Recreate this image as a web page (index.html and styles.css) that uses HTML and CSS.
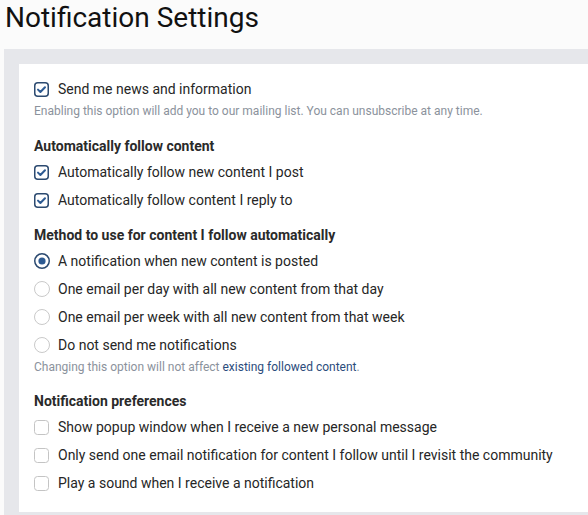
FILE: index.html
```html
<!DOCTYPE html>
<html>
<head>
<meta charset="utf-8">
<link rel="stylesheet" href="styles.css">
</head>
<body>
<header class="top"><h1 class="title">Notification Settings</h1></header>
<div class="panel">
  <div class="card">
    <div class="group">
      <label class="opt"><span class="cb on"><svg width="15" height="15" viewBox="0 0 15 15"><rect x="0.75" y="0.75" width="13.5" height="13.5" rx="3" fill="none" stroke="#2c4a70" stroke-width="1.5"/><path d="M4 7.6 L6.4 10 L11 5.2" fill="none" stroke="#2d5a92" stroke-width="2" stroke-linecap="round" stroke-linejoin="round"/></svg></span>Send me news and information</label>
      <p class="help">Enabling this option will add you to our mailing list. You can unsubscribe at any time.</p>
    </div>
    <div class="group">
      <h2 class="head">Automatically follow content</h2>
      <label class="opt"><span class="cb on"><svg width="15" height="15" viewBox="0 0 15 15"><rect x="0.75" y="0.75" width="13.5" height="13.5" rx="3" fill="none" stroke="#2c4a70" stroke-width="1.5"/><path d="M4 7.6 L6.4 10 L11 5.2" fill="none" stroke="#2d5a92" stroke-width="2" stroke-linecap="round" stroke-linejoin="round"/></svg></span>Automatically follow new content I post</label>
      <label class="opt"><span class="cb on"><svg width="15" height="15" viewBox="0 0 15 15"><rect x="0.75" y="0.75" width="13.5" height="13.5" rx="3" fill="none" stroke="#2c4a70" stroke-width="1.5"/><path d="M4 7.6 L6.4 10 L11 5.2" fill="none" stroke="#2d5a92" stroke-width="2" stroke-linecap="round" stroke-linejoin="round"/></svg></span>Automatically follow content I reply to</label>
    </div>
    <div class="group">
      <h2 class="head">Method to use for content I follow automatically</h2>
      <label class="opt"><span class="rd on"><svg width="16" height="16" viewBox="0 0 16 16"><circle cx="8" cy="8" r="7.25" fill="none" stroke="#2c4a70" stroke-width="1.5"/><circle cx="8" cy="8" r="3.6" fill="#2d5a92"/></svg></span>A notification when new content is posted</label>
      <label class="opt"><span class="rd"><svg width="16" height="16" viewBox="0 0 16 16"><circle cx="8" cy="8" r="7.5" fill="none" stroke="#c9c9c9" stroke-width="1"/></svg></span>One email per day with all new content from that day</label>
      <label class="opt"><span class="rd"><svg width="16" height="16" viewBox="0 0 16 16"><circle cx="8" cy="8" r="7.5" fill="none" stroke="#c9c9c9" stroke-width="1"/></svg></span>One email per week with all new content from that week</label>
      <label class="opt"><span class="rd"><svg width="16" height="16" viewBox="0 0 16 16"><circle cx="8" cy="8" r="7.5" fill="none" stroke="#c9c9c9" stroke-width="1"/></svg></span>Do not send me notifications</label>
      <p class="help help-tight">Changing this option will not affect <a class="link" href="#">existing followed content</a>.</p>
    </div>
    <div class="group">
      <h2 class="head">Notification preferences</h2>
      <label class="opt"><span class="cb"><svg width="15" height="15" viewBox="0 0 15 15"><rect x="0.5" y="0.5" width="14" height="14" rx="3" fill="none" stroke="#c4c4c4" stroke-width="1"/></svg></span>Show popup window when I receive a new personal message</label>
      <label class="opt"><span class="cb"><svg width="15" height="15" viewBox="0 0 15 15"><rect x="0.5" y="0.5" width="14" height="14" rx="3" fill="none" stroke="#c4c4c4" stroke-width="1"/></svg></span>Only send one email notification for content I follow until I revisit the community</label>
      <label class="opt"><span class="cb"><svg width="15" height="15" viewBox="0 0 15 15"><rect x="0.5" y="0.5" width="14" height="14" rx="3" fill="none" stroke="#c4c4c4" stroke-width="1"/></svg></span>Play a sound when I receive a notification</label>
    </div>
  </div>
</div>
</body>
</html>
```
FILE: styles.css
```css
html, body {
  margin: 0;
  padding: 0;
  background: #fbfbfb;
  font-family: Roboto, "Liberation Sans", sans-serif;
  color: #222;
}
.top {
  height: 49px;
}
.title {
  margin: 0;
  padding-left: 5px;
  font-size: 28px;
  font-weight: 400;
  line-height: 36px;
  color: #111;
}
.panel {
  margin-left: 4px;
  background: #e6e7eb;
  padding: 15px 0 3px 15px;
}
.card {
  background: #fff;
  padding: 11px 15px 15px 15px;
  display: flex;
  flex-direction: column;
  gap: 11px;
}
.group {
  display: flex;
  flex-direction: column;
}
.opt {
  display: flex;
  align-items: center;
  height: 28px;
  font-size: 14px;
  color: #262626;
}
.cb, .rd {
  display: flex;
  width: 16px;
  height: 16px;
  align-items: center;
  justify-content: flex-start;
  margin-right: 8px;
}
.help {
  margin: 0 0 6px 0;
  font-size: 12px;
  line-height: 16px;
  color: #8b929c;
}
.help-tight {
  margin-bottom: 5px;
}
.link {
  color: #2c4c7c;
  text-decoration: none;
}
.head {
  margin: 0 0 2px 0;
  font-size: 14px;
  font-weight: 700;
  line-height: 20px;
  color: #2a2a2a;
}
```
